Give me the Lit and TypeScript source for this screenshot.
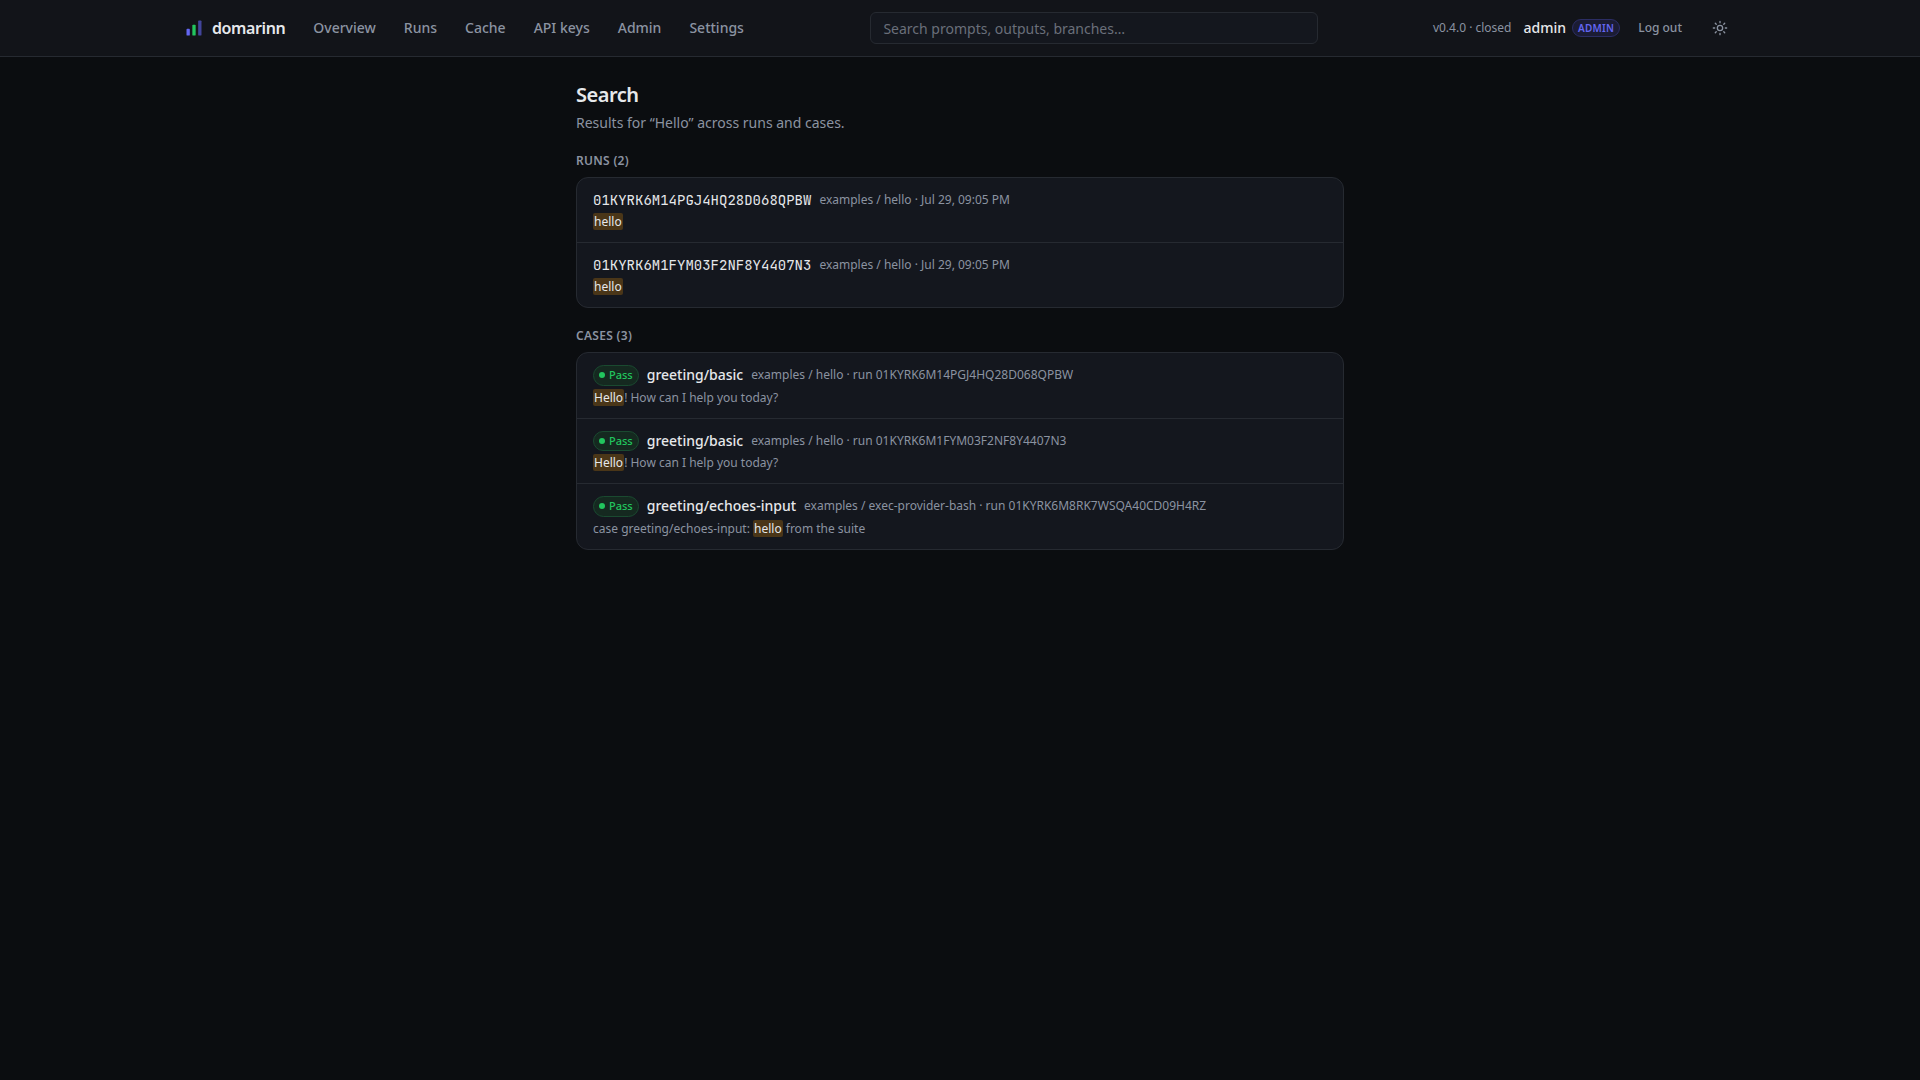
import { LitElement, html, css } from "lit";
import { customElement } from "lit/decorators.js";

const NAV = ["Overview", "Runs", "Cache", "API keys", "Admin", "Settings"];

const RUNS = [
  { id: "01KYRK6M14PGJ4HQ28D068QPBW", meta: "examples / hello · Jul 29, 09:05 PM", hit: "hello" },
  { id: "01KYRK6M1FYM03F2NF8Y4407N3", meta: "examples / hello · Jul 29, 09:05 PM", hit: "hello" },
];

const CASES = [
  { name: "greeting/basic", meta: "examples / hello · run 01KYRK6M14PGJ4HQ28D068QPBW", before: "", hit: "Hello", after: "! How can I help you today?" },
  { name: "greeting/basic", meta: "examples / hello · run 01KYRK6M1FYM03F2NF8Y4407N3", before: "", hit: "Hello", after: "! How can I help you today?" },
  { name: "greeting/echoes-input", meta: "examples / exec-provider-bash · run 01KYRK6M8RK7WSQA40CD09H4RZ", before: "case greeting/echoes-input: ", hit: "hello", after: " from the suite" },
];

@customElement("app-root")
export class AppRoot extends LitElement {
  static styles = css`
    :host {
      display: block;
      min-height: 100vh;
      background: #0b0d10;
      color: #e6e8eb;
      font-family: "Noto Sans", sans-serif;
      font-size: 14px;
      line-height: 20px;
    }
    * { box-sizing: border-box; }
    .header { background: #121419; border-bottom: 1px solid #262a31; }
    .bar {
      max-width: 1600px;
      height: 56px;
      margin: 0 auto;
      padding: 0 24px;
      display: flex;
      align-items: center;
    }
    .brand {
      display: flex;
      align-items: center;
      gap: 8px;
      font-size: 16px;
      font-weight: 600;
      line-height: 24px;
      letter-spacing: -0.4px;
      margin-right: 28px;
    }
    .brand svg, .theme svg { display: block; }
    .nav { display: flex; gap: 28px; font-weight: 500; color: #8b93a1; }
    .find { flex: 1; display: flex; justify-content: center; padding-left: 12px; }
    .field {
      width: 448px;
      height: 32px;
      padding: 0 12px;
      border: 1px solid #262a31;
      border-radius: 6px;
      background: #14171e;
      color: #e6e8eb;
      font: inherit;
      outline: none;
    }
    .field::placeholder { color: #6a6f7a; opacity: 1; }
    .account { display: flex; align-items: center; }
    .version { font-size: 12px; color: #8b93a1; margin-right: 12px; }
    .user { font-weight: 500; margin-right: 6px; }
    .role {
      height: 18px;
      padding: 0 5px;
      border: 1px solid #2b2d63;
      border-radius: 9px;
      background: #1b1c34;
      color: #6366f1;
      font-size: 10px;
      font-weight: 600;
      line-height: 16px;
      letter-spacing: 0.25px;
    }
    .logout { font-size: 12px; font-weight: 500; color: #8b93a1; margin: 0 22px 0 18px; }
    .theme { width: 32px; height: 32px; display: grid; place-items: center; color: #8b93a1; }

    .main { width: 768px; margin: 0 auto; padding-top: 24px; }
    .title { margin: 0; font-size: 20px; line-height: 28px; font-weight: 600; letter-spacing: -0.5px; }
    .sub { margin: 4px 0 0; color: #8b93a1; }
    .label {
      margin: 20px 0 8px;
      font-size: 12px;
      line-height: 16px;
      font-weight: 600;
      letter-spacing: 0.3px;
      text-transform: uppercase;
      color: #8b93a1;
    }
    .card { border: 1px solid #262a31; border-radius: 12px; background: #14171e; }
    .row { padding: 12px 16px; }
    .row + .row { border-top: 1px solid #262a31; }
    .line { display: flex; align-items: center; gap: 8px; }
    .mono { font-family: "JetBrains Mono", "DejaVu Sans Mono", monospace; }
    .name { font-weight: 500; }
    .meta { font-size: 12px; line-height: 16px; color: #8b93a1; }
    .snip { margin-top: 4px; font-size: 12px; line-height: 16px; color: #8b93a1; }
    .hit { background: #4a3618; color: #e6e8eb; border-radius: 2px; padding: 0 1px; }
    .pass {
      display: inline-flex;
      align-items: center;
      gap: 4px;
      padding: 1px 5px;
      border: 1px solid #1a4a30;
      border-radius: 999px;
      background: #152920;
      color: #22c55e;
      font-size: 11px;
      line-height: 16.5px;
      font-weight: 500;
    }
    .dot { width: 6px; height: 6px; border-radius: 50%; background: #22c55e; }
  `;

  render() {
    return html`
      <header class="header">
        <div class="bar">
          <div class="brand">
            <svg width="20" height="20" viewBox="0 0 24 24">
              <rect x="3" y="13" width="4" height="8" rx="1" fill="#6366f1" />
              <rect x="10" y="8" width="4" height="13" rx="1" fill="#22c55e" />
              <rect x="17" y="3" width="4" height="18" rx="1" fill="#6366f1" opacity="0.6" />
            </svg>
            <span>domarinn</span>
          </div>
          <nav class="nav">${NAV.map((n) => html`<span>${n}</span>`)}</nav>
          <div class="find"><input class="field" placeholder="Search prompts, outputs, branches…" /></div>
          <div class="account">
            <span class="version">v0.4.0 · closed</span>
            <span class="user">admin</span>
            <span class="role">ADMIN</span>
            <span class="logout">Log out</span>
            <span class="theme">
              <svg width="16" height="16" viewBox="0 0 24 24" fill="none" stroke="currentColor" stroke-width="2" stroke-linecap="round">
                <circle cx="12" cy="12" r="4" />
                <path d="M12 2v2M12 20v2M4.93 4.93l1.41 1.41M17.66 17.66l1.41 1.41M2 12h2M20 12h2M6.34 17.66l-1.41 1.41M19.07 4.93l-1.41 1.41" />
              </svg>
            </span>
          </div>
        </div>
      </header>
      <main class="main">
        <h1 class="title">Search</h1>
        <p class="sub">Results for “Hello” across runs and cases.</p>
        <h2 class="label">Runs (${RUNS.length})</h2>
        <div class="card">
          ${RUNS.map((r) => html`<div class="row">
            <div class="line"><span class="mono">${r.id}</span><span class="meta">${r.meta}</span></div>
            <div class="snip"><span class="hit">${r.hit}</span></div>
          </div>`)}
        </div>
        <h2 class="label">Cases (${CASES.length})</h2>
        <div class="card">
          ${CASES.map((c) => html`<div class="row">
            <div class="line"><span class="pass"><span class="dot"></span>Pass</span><span class="name">${c.name}</span><span class="meta">${c.meta}</span></div>
            <div class="snip">${c.before}<span class="hit">${c.hit}</span>${c.after}</div>
          </div>`)}
        </div>
      </main>
    `;
  }
}
